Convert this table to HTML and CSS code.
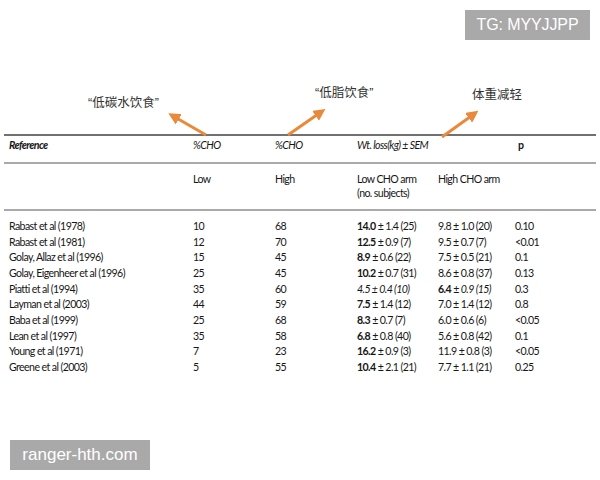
FILE: index.html
```html
<!DOCTYPE html>
<html>
<head>
<meta charset="utf-8">
<link rel="stylesheet" href="styles.css">
</head>
<body>
<div class="page">
  <div class="topbar"><span class="badge tg">TG: MYYJJPP</span></div>

  <div class="overlay">
    <svg class="arrows" width="600" height="480" viewBox="0 0 600 480">
      <defs>
        <marker id="ah" markerWidth="4" markerHeight="4" refX="2.2" refY="2" orient="auto" markerUnits="strokeWidth">
          <path d="M0,0 L4,2 L0,4 Z" fill="#e9893b"/>
        </marker>
      </defs>
      <line x1="206" y1="135" x2="173" y2="116" stroke="#e9893b" stroke-width="3" marker-end="url(#ah)"/>
      <line x1="288" y1="135" x2="321" y2="112" stroke="#e9893b" stroke-width="3" marker-end="url(#ah)"/>
      <line x1="442" y1="137" x2="474" y2="114" stroke="#e9893b" stroke-width="3" marker-end="url(#ah)"/>
    </svg>
    <span class="label l1">“低碳水饮食”</span>
    <span class="label l2">“低脂饮食”</span>
    <span class="label l3">体重减轻</span>
  </div>

  <div class="tbl">
    <div class="row head">
      <div class="c bi">Reference</div>
      <div class="c i">%CHO</div>
      <div class="c i">%CHO</div>
      <div class="c i">Wt. loss(kg) ± SEM</div>
      <div class="c"></div>
      <div class="c b pcol">p</div>
    </div>
    <div class="row sub">
      <div class="c"></div>
      <div class="c">Low</div>
      <div class="c">High</div>
      <div class="c">Low CHO arm<br>(no. subjects)</div>
      <div class="c">High CHO arm</div>
      <div class="c"></div>
    </div>
    <div class="body">
      <div class="row"><div class="c">Rabast et al (1978)</div><div class="c">10</div><div class="c">68</div><div class="c"><b>14.0</b> ± 1.4 (25)</div><div class="c">9.8 ± 1.0 (20)</div><div class="c pd">0.10</div></div>
      <div class="row"><div class="c">Rabast et al (1981)</div><div class="c">12</div><div class="c">70</div><div class="c"><b>12.5</b> ± 0.9 (7)</div><div class="c">9.5 ± 0.7 (7)</div><div class="c pd">&lt;0.01</div></div>
      <div class="row"><div class="c">Golay, Allaz et al (1996)</div><div class="c">15</div><div class="c">45</div><div class="c"><b>8.9</b> ± 0.6 (22)</div><div class="c">7.5 ± 0.5 (21)</div><div class="c pd">0.1</div></div>
      <div class="row"><div class="c">Golay, Eigenheer et al (1996)</div><div class="c">25</div><div class="c">45</div><div class="c"><b>10.2</b> ± 0.7 (31)</div><div class="c">8.6 ± 0.8 (37)</div><div class="c pd">0.13</div></div>
      <div class="row"><div class="c">Piatti et al (1994)</div><div class="c">35</div><div class="c">60</div><div class="c i">4.5 ± 0.4 (10)</div><div class="c"><b>6.4</b> ± <i>0.9 (15)</i></div><div class="c pd">0.3</div></div>
      <div class="row"><div class="c">Layman et al (2003)</div><div class="c">44</div><div class="c">59</div><div class="c"><b>7.5</b> ± 1.4 (12)</div><div class="c">7.0 ± 1.4 (12)</div><div class="c pd">0.8</div></div>
      <div class="row"><div class="c">Baba et al (1999)</div><div class="c">25</div><div class="c">68</div><div class="c"><b>8.3</b> ± 0.7 (7)</div><div class="c">6.0 ± 0.6 (6)</div><div class="c pd">&lt;0.05</div></div>
      <div class="row"><div class="c">Lean et al (1997)</div><div class="c">35</div><div class="c">58</div><div class="c"><b>6.8</b> ± 0.8 (40)</div><div class="c">5.6 ± 0.8 (42)</div><div class="c pd">0.1</div></div>
      <div class="row"><div class="c">Young et al (1971)</div><div class="c">7</div><div class="c">23</div><div class="c"><b>16.2</b> ± 0.9 (3)</div><div class="c">11.9 ± 0.8 (3)</div><div class="c pd">&lt;0.05</div></div>
      <div class="row"><div class="c">Greene et al (2003)</div><div class="c">5</div><div class="c">55</div><div class="c"><b>10.4</b> ± 2.1 (21)</div><div class="c">7.7 ± 1.1 (21)</div><div class="c pd">0.25</div></div>
    </div>
  </div>

  <div class="footer"><span class="badge site">ranger-hth.com</span></div>
</div>
</body>
</html>
```

FILE: styles.css
```css
html, body {
  margin: 0;
  padding: 0;
  background: #ffffff;
}

.page {
  position: relative;
  width: 600px;
  height: 480px;
  overflow: hidden;
}

.topbar {
  display: flex;
  justify-content: flex-end;
  padding: 10px 10px 0 0;
  height: 30px;
}

.badge {
  display: flex;
  align-items: center;
  justify-content: center;
  background: #a9a9a9;
  color: #ffffff;
  font-family: "Liberation Sans", Arial, sans-serif;
  height: 30px;
}

.tg {
  width: 125px;
  font-size: 16px;
  letter-spacing: -0.1px;
}

.overlay {
  position: absolute;
  left: 0;
  top: 0;
  width: 600px;
  height: 480px;
  pointer-events: none;
}

.arrows {
  position: absolute;
  left: 0;
  top: 0;
}

.label {
  position: absolute;
  font-family: "Liberation Sans", "Noto Sans CJK SC", sans-serif;
  font-size: 12.5px;
  line-height: 14px;
  color: #333333;
  white-space: nowrap;
}

.l1 { left: 88px; top: 96px; }
.l2 { left: 315px; top: 86px; }
.l3 { left: 472px; top: 88px; }

.tbl {
  margin: 94px 0 0 4px;
  width: 592px;
  border-top: 2px solid #717171;
  font-family: Lato, "Liberation Sans", sans-serif;
  font-size: 10.6px;
  letter-spacing: -0.6px;
  color: #161616;
}

.row {
  display: grid;
  grid-template-columns: 184px 82px 82px 81px 80px 1fr;
  white-space: nowrap;
}

.c {
  padding-left: 5px;
  line-height: 14px;
}

.head {
  height: 24px;
  padding-top: 2px;
  border-bottom: 2px solid #aaaaaa;
}

.sub {
  height: 37px;
  padding-top: 8px;
  border-bottom: 2px solid #aaaaaa;
}

.body {
  padding-top: 8px;
}

.body .row .c {
  line-height: 15.67px;
}

.pd { padding-left: 2px; }

.b { font-weight: bold; }
.i { font-style: italic; }
.bi { font-weight: bold; font-style: italic; }

.footer {
  margin-top: 64px;
  padding-left: 10px;
  display: flex;
}

.site {
  width: 140px;
  font-size: 17px;
}
```
